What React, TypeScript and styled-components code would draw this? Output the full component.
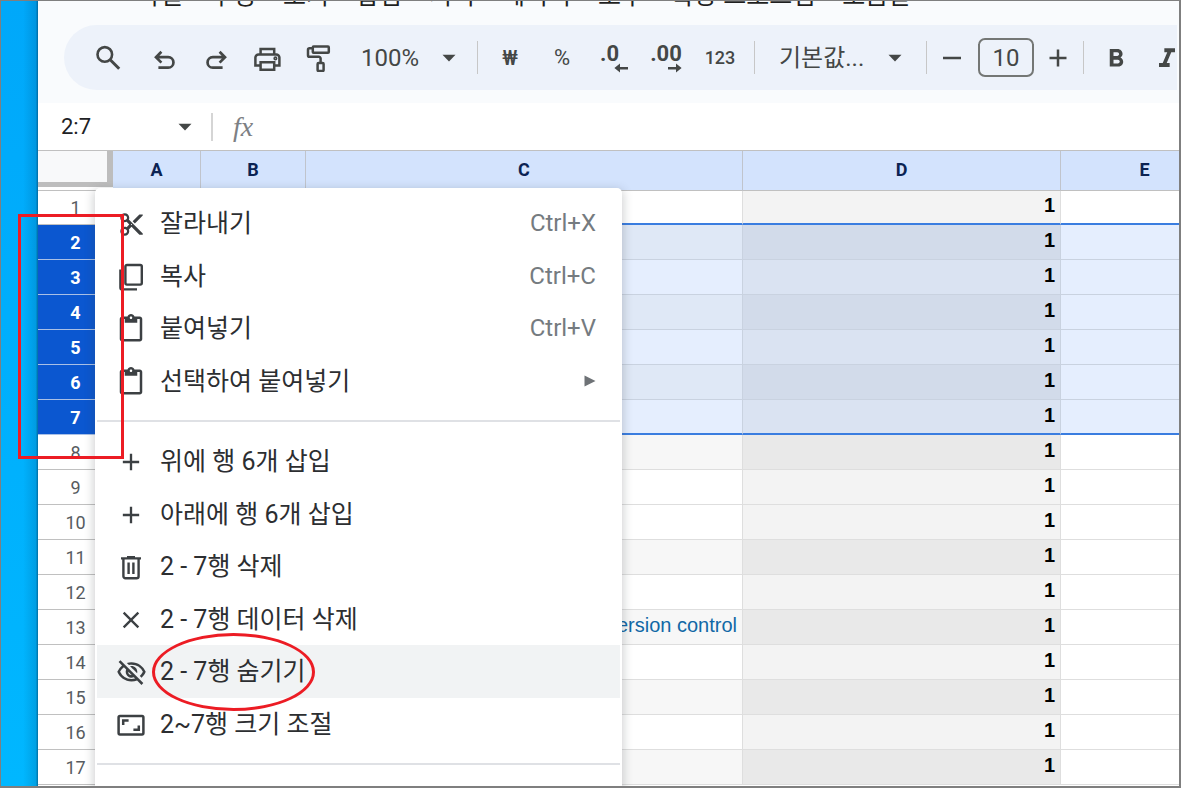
import React from 'react';
import styled, { createGlobalStyle, css } from 'styled-components';
import {
  MdAdd,
  MdClose,
  MdContentCut,
  MdContentPaste,
  MdFormatBold,
  MdFormatItalic,
  MdOutlineVisibilityOff,
} from 'react-icons/md';

const uiFont = `Roboto, "Noto Sans CJK KR", sans-serif`;
const cellFont = `"Liberation Sans", "Noto Sans CJK KR", sans-serif`;

const GlobalStyle = createGlobalStyle`
  *, *::before, *::after { box-sizing: border-box; }
  body { margin: 0; font-family: ${uiFont}; }
  button, input, select { font: inherit; color: inherit; margin: 0; padding: 0; border: 0; background: none; }
`;

const Frame = styled.div`
  position: relative;
  display: flex;
  height: 100vh;
  overflow: hidden;
  border: 1px solid #7f7f7f;
  border-right-width: 2px;
  border-bottom-width: 2px;
  background: #fff;
`;

const Desktop = styled.div`
  flex: 0 0 37px;
  background: linear-gradient(90deg, transparent 60%, rgba(0, 50, 90, 0.16) 94%, rgba(0, 40, 70, 0.5)),
    linear-gradient(#00a8fa, #00b7ff);
`;

const Sheet = styled.main`
  flex: 1;
  min-width: 0;
  overflow: hidden;
`;

const TopBar = styled.header`
  height: 102px;
  overflow: hidden;
  background: #f9fbfd;
`;

const MenuBar = styled.nav`
  display: flex;
  align-items: flex-end;
  gap: 27px;
  height: 24px;
  padding-left: 99px;
`;

const MenuBarButton = styled.button`
  flex: none;
  height: 58px;
  font-size: 25px;
  line-height: 58px;
  color: #1f1f1f;
`;

const Toolbar = styled.div`
  display: flex;
  align-items: center;
  height: 65px;
  margin: 0 2px 0 26px;
  padding-left: 18px;
  overflow: hidden;
  border-radius: 33px 0 0 33px;
  background: #edf2fa;
  color: #444746;
`;

const ToolGroup = styled.div`
  display: flex;
  align-items: center;
  flex: none;
  padding: 0 3px 0 6px;
`;

const ToolButton = styled.button<{ $width?: number; $size?: number; $weight?: number }>`
  display: flex;
  align-items: center;
  justify-content: center;
  flex: none;
  width: ${(p) => p.$width ?? 51}px;
  height: 52px;
  font-size: ${(p) => p.$size ?? 22}px;
  font-weight: ${(p) => p.$weight ?? 400};
`;

const StyleTools = styled.div`
  display: flex;
  flex: none;
  padding-top: 2px;
`;

const Divider = styled.span`
  flex: none;
  width: 1px;
  height: 33px;
  margin: 0 6px;
  background: #c7c7c7;
`;

const Dropdown = styled.label<{ $width: number; $inset: number }>`
  display: flex;
  align-items: center;
  justify-content: space-between;
  flex: none;
  width: ${(p) => p.$width}px;
  padding: 0 ${(p) => p.$inset}px 0 ${(p) => p.$inset}px;
  font-size: 24px;

  select {
    appearance: none;
    outline: none;
    height: 40px;
  }
`;

const SizeInput = styled.input`
  width: 56px;
  height: 39px;
  margin: 0 5px 0 7px;
  border: 2px solid #747775;
  border-radius: 7px;
  font-size: 24px;
  text-align: center;
`;

const Decimals = styled.span`
  display: flex;
  flex-direction: column;
  font-size: 22px;
  font-weight: 700;
  line-height: 19px;
  padding-top: 2px;

  svg {
    align-self: flex-end;
  }
`;

const DecreaseLabel = styled(Decimals)`
  width: 28px;
  text-align: left;
`;

const FormulaBar = styled.div`
  display: flex;
  align-items: center;
  height: 48px;
  border-bottom: 1px solid #c0c0c0;
  background: #fff;
`;

const NameBox = styled.label`
  display: flex;
  align-items: center;
  justify-content: space-between;
  width: 175px;
  padding: 0 19px 0 23px;
  border-right: 2px solid #d5d5d5;
  color: #202124;

  input {
    width: 80px;
    height: 28px;
    font-size: 22px;
  }
`;

const FormulaLabel = styled.label`
  display: flex;
  flex: 1;
  align-items: center;
  padding-left: 20px;
  font: italic 400 28px/28px "Liberation Serif", serif;
  color: #7d8084;

  input {
    flex: 1;
  }
`;

const Grid = styled.table`
  table-layout: fixed;
  width: 1191px;
  min-width: 100%;
  border-collapse: separate;
  border-spacing: 0;
`;

const Col = styled.col<{ $width: number }>`
  width: ${(p) => p.$width}px;
`;

const ColumnHeader = styled.th`
  height: 40px;
  padding: 0 0 2px;
  border-right: 1px solid #c0c4cc;
  border-bottom: 1px solid #c0c0c0;
  background: #d3e3fd;
  font-size: 18px;
  font-weight: 700;
  color: #0b2353;
`;

const CornerHeader = styled.td`
  padding: 0;
  vertical-align: top;
  border-bottom: 1px solid #c0c0c0;
`;

const Corner = styled.div`
  height: 36px;
  border: solid #bdbdbd;
  border-width: 0 6px 5px 0;
  background: #f8f9fa;
`;

const RowHeader = styled.th<{ $selected: boolean }>`
  padding: 0;
  border-bottom: 1px solid #c0c0c0;
  font-size: 18px;
  font-weight: 400;
  color: #575b5f;
  background: #fff;
  ${(p) =>
    p.$selected &&
    css`
      font-weight: 700;
      color: #fff;
      background: #0b57d0;
      border-bottom-color: #a9c0e6;
    `}
`;

type Tone = 'plain' | 'grey';

const fills: Record<Tone, [string, string, string, string]> = {
  // [unselected, unselected band, selected, selected band]
  plain: ['#ffffff', '#f7f7f7', '#e5eefe', '#dfe8f6'],
  grey: ['#f3f3f3', '#e9e9e9', '#dae3f2', '#d2dbea'],
};

const Cell = styled.td<{ $tone: Tone; $band: boolean; $selected: boolean }>`
  padding: 0 5px 4px 0;
  overflow: hidden;
  white-space: nowrap;
  text-align: right;
  border-right: 1px solid ${(p) => (p.$selected ? '#c9d2e0' : '#dedede')};
  border-bottom: 1px solid ${(p) => (p.$selected ? '#c9d2e0' : '#dedede')};
  background: ${(p) => fills[p.$tone][(p.$selected ? 2 : 0) + (p.$band ? 1 : 0)]};
  font: 700 20px/22px ${cellFont};
  color: #000;

  a {
    font-weight: 400;
    color: #1168a6;
    text-decoration: none;
  }
`;

const Row = styled.tr<{ $edge: boolean; $short: boolean }>`
  height: ${(p) => (p.$short ? 34 : 35)}px;

  ${(p) =>
    p.$edge &&
    css`
      ${Cell} {
        border-bottom: 2px solid #3a7de0;
      }
    `}
`;

const ContextMenu = styled.div`
  position: absolute;
  left: 94px;
  top: 187px;
  width: 527px;
  height: 640px;
  padding-top: 9px;
  border-radius: 5px;
  background: #fff;
  box-shadow: 0 3px 10px 2px rgba(60, 64, 67, 0.22);
`;

const MenuGroup = styled.div<{ $height: number }>`
  display: grid;
  grid-auto-rows: 1fr;
  height: ${(p) => p.$height}px;
`;

const MenuRule = styled.hr`
  height: 2px;
  margin: 13px 2px;
  border: 0;
  background: #dfe1e5;
`;

const MenuItem = styled.button<{ $active?: boolean }>`
  display: flex;
  align-items: center;
  margin: 0 2px;
  padding: 0 24px 0 17px;
  text-align: left;
  font-size: 25px;
  color: #2c2e31;
  background: ${(p) => (p.$active ? '#f1f3f4' : 'transparent')};
`;

const IconSlot = styled.span`
  display: flex;
  justify-content: center;
  flex: none;
  width: 34px;
  margin-right: 12px;
  padding-top: 2px;
  color: #3c4043;
`;

const ItemLabel = styled.span`
  flex: 1;
  padding-bottom: 4px;
`;

const Shortcut = styled.kbd`
  font-family: ${uiFont};
  font-size: 24px;
  color: #757b80;
`;

const Mark = styled.div`
  position: absolute;
  border: 3px solid #ec1c24;
  pointer-events: none;
`;

const RowsMark = styled(Mark)`
  left: 17px;
  top: 213px;
  width: 106px;
  height: 245px;
`;

const HideMark = styled(Mark)`
  left: 151px;
  top: 632px;
  width: 163px;
  height: 78px;
  border-radius: 50%;
`;

const Line = ({ children, size = 28, width = 2.5 }: { children: React.ReactNode; size?: number; width?: number }) => (
  <svg width={size} height={size} viewBox="0 0 28 28" fill="none" stroke="currentColor" strokeWidth={width} aria-hidden="true">
    {children}
  </svg>
);

const SearchIcon = () => (
  <Line width={2.6}>
    <circle cx="10.8" cy="10.4" r="7.3" />
    <path d="M16.2 15.8 L25.2 24.8" strokeWidth="3" />
  </Line>
);

const UndoIcon = () => (
  <Line width={2.7}>
    <path d="M10.4 7.8 L5 13.2 L10.4 18.6 M5.2 13.2 H17.2 a5.2 5.2 0 0 1 0 10.5 H7.4" />
  </Line>
);

const RedoIcon = () => (
  <Line width={2.7}>
    <path d="M17.6 7.8 L23 13.2 L17.6 18.6 M22.8 13.2 H10.8 a5.2 5.2 0 0 0 0 10.5 H20.6" />
  </Line>
);

const PrintIcon = () => (
  <Line>
    <path d="M7.6 10.2 V4.9 H21.2 V10.2" />
    <path d="M7 21.4 H2.4 V13.6 a3.2 3.2 0 0 1 3.2 -3.2 H23.2 a3.2 3.2 0 0 1 3.2 3.2 V21.4 H21.8" />
    <path d="M7.6 18.2 H21.2 V25.8 H7.6 Z" />
    <circle cx="22.4" cy="14.4" r="0.8" />
  </Line>
);

const PaintIcon = () => (
  <Line>
    <rect x="8.8" y="2.6" width="16" height="6.2" rx="0.8" />
    <path d="M8.8 4.2 H5.6 a1.6 1.6 0 0 0 -1.6 1.6 V11.2 a1.6 1.6 0 0 0 1.6 1.6 H14.8 a1.8 1.8 0 0 1 1.8 1.8 V19" />
    <rect x="13.6" y="19" width="6" height="8" rx="1" />
  </Line>
);

const Caret = () => (
  <svg width="14" height="8" viewBox="0 0 14 8" aria-hidden="true">
    <path d="M0.5 0.8 H13.5 L7 7.4 Z" fill="#444746" />
  </svg>
);

const Arrow = ({ flip }: { flip?: boolean }) => (
  <svg width="14" height="10" viewBox="0 0 14 10" aria-hidden="true">
    <path
      d={flip ? 'M0 4 H8 V0.4 L13.6 5 L8 9.6 V6.4 H0 Z' : 'M14 4 H6 V0.4 L0.4 5 L6 9.6 V6.4 H14 Z'}
      fill="currentColor"
    />
  </svg>
);

const CopyIcon = () => (
  <Line width={2.4}>
    <rect x="8.4" y="2" width="16.4" height="19.6" rx="1.6" />
    <path d="M3.4 6.4 V24.4 a2 2 0 0 0 2 2 H20" />
  </Line>
);

const TrashIcon = () => (
  <Line width={2.4}>
    <path d="M4 5.4 H24 M10 4.2 H18" />
    <path d="M6.4 5.4 V23.2 a2 2 0 0 0 2 2 H19.6 a2 2 0 0 0 2 -2 V5.4" />
    <path d="M11.6 9.4 V21 M16.4 9.4 V21" />
  </Line>
);

const ResizeIcon = () => (
  <Line width={2.5}>
    <rect x="1.6" y="5" width="24.8" height="18.4" rx="1.4" />
    <path d="M6.2 14 V9.6 H11.6 M21.8 14.4 V18.8 H16.4" />
  </Line>
);

const SubmenuArrow = () => (
  <svg width="12" height="12" viewBox="0 0 12 12" aria-hidden="true">
    <path d="M0.5 0.5 L11.5 6 L0.5 11.5 Z" fill="#6e7276" />
  </svg>
);

type Entry = { icon: React.ReactNode; label: string; keys?: string; submenu?: boolean; active?: boolean };

const editEntries: Entry[] = [
  { icon: <MdContentCut size={27} />, label: '잘라내기', keys: 'Ctrl+X' },
  { icon: <CopyIcon />, label: '복사', keys: 'Ctrl+C' },
  { icon: <MdContentPaste size={30} />, label: '붙여넣기', keys: 'Ctrl+V' },
  { icon: <MdContentPaste size={30} />, label: '선택하여 붙여넣기', submenu: true },
];

const rowEntries: Entry[] = [
  { icon: <MdAdd size={28} />, label: '위에 행 6개 삽입' },
  { icon: <MdAdd size={28} />, label: '아래에 행 6개 삽입' },
  { icon: <TrashIcon />, label: '2 - 7행 삭제' },
  { icon: <MdClose size={28} />, label: '2 - 7행 데이터 삭제' },
  { icon: <MdOutlineVisibilityOff size={31} />, label: '2 - 7행 숨기기', active: true },
  { icon: <ResizeIcon />, label: '2~7행 크기 조절' },
];

const menus = ['파일', '수정', '보기', '삽입', '서식', '데이터', '도구', '확장 프로그램', '도움말'];
const columns = ['A', 'B', 'C', 'D', 'E'];
const columnWidths = [75, 88, 105, 437, 318, 168];
const bandedRows = [2, 4, 6, 8, 11, 13, 15, 17];
const rows = Array.from({ length: 17 }, (_, i) => i + 1);

const Entries = ({ items, height }: { items: Entry[]; height: number }) => (
  <MenuGroup $height={height} role="group">
    {items.map((item) => (
      <MenuItem key={item.label} role="menuitem" $active={item.active}>
        <IconSlot>{item.icon}</IconSlot>
        <ItemLabel>{item.label}</ItemLabel>
        {item.keys && <Shortcut>{item.keys}</Shortcut>}
        {item.submenu && <SubmenuArrow />}
      </MenuItem>
    ))}
  </MenuGroup>
);

export default function App() {
  return (
    <>
      <GlobalStyle />
      <Frame>
        <Desktop />
        <Sheet>
          <TopBar>
            <MenuBar>
              {menus.map((name) => (
                <MenuBarButton key={name}>{name}</MenuBarButton>
              ))}
            </MenuBar>
            <Toolbar role="toolbar">
              <ToolButton aria-label="검색"><SearchIcon /></ToolButton>
              <ToolGroup>
                <ToolButton aria-label="실행취소"><UndoIcon /></ToolButton>
                <ToolButton aria-label="재실행"><RedoIcon /></ToolButton>
                <ToolButton aria-label="인쇄"><PrintIcon /></ToolButton>
                <ToolButton aria-label="서식 복사"><PaintIcon /></ToolButton>
              </ToolGroup>
              <Dropdown $width={125} $inset={15}>
                <select aria-label="확대/축소" defaultValue="100%">
                  <option>100%</option>
                </select>
                <Caret />
              </Dropdown>
              <Divider />
              <ToolButton $width={52} $size={20} $weight={500}>₩</ToolButton>
              <ToolButton $width={52}>%</ToolButton>
              <ToolButton $width={52} aria-label="소수점 이하 자릿수 감소">
                <DecreaseLabel>.0<Arrow /></DecreaseLabel>
              </ToolButton>
              <ToolButton $width={52} aria-label="소수점 이하 자릿수 증가">
                <Decimals>.00<Arrow flip /></Decimals>
              </ToolButton>
              <ToolButton $width={56} $size={18} $weight={500}>123</ToolButton>
              <Divider />
              <Dropdown $width={159} $inset={18}>
                <select aria-label="글꼴" defaultValue="기본값...">
                  <option>기본값...</option>
                </select>
                <Caret />
              </Dropdown>
              <Divider />
              <ToolButton $width={38} aria-label="글꼴 크기 줄이기">
                <Line><path d="M5 14 H23" /></Line>
              </ToolButton>
              <SizeInput aria-label="글꼴 크기" defaultValue="10" />
              <ToolButton $width={38} aria-label="글꼴 크기 늘리기">
                <Line><path d="M5.5 14 H22.5 M14 5.5 V22.5" /></Line>
              </ToolButton>
              <Divider />
              <StyleTools>
                <ToolButton aria-label="굵게"><MdFormatBold size={30} /></ToolButton>
                <ToolButton aria-label="기울임꼴"><MdFormatItalic size={32} /></ToolButton>
              </StyleTools>
            </Toolbar>
          </TopBar>
          <FormulaBar>
            <NameBox>
              <input aria-label="이름 상자" defaultValue="2:7" />
              <Caret />
            </NameBox>
            <FormulaLabel>
              fx
              <input aria-label="수식" />
            </FormulaLabel>
          </FormulaBar>
          <Grid>
            <colgroup>
              {columnWidths.map((width, i) => (
                <Col key={i} $width={width} />
              ))}
            </colgroup>
            <thead>
              <tr>
                <CornerHeader><Corner /></CornerHeader>
                {columns.map((name) => (
                  <ColumnHeader key={name} scope="col">{name}</ColumnHeader>
                ))}
              </tr>
            </thead>
            <tbody>
              {rows.map((n) => {
                const selected = n >= 2 && n <= 7;
                const band = bandedRows.includes(n);
                return (
                  <Row key={n} $edge={n === 1 || n === 7} $short={n === 1}>
                    <RowHeader scope="row" $selected={selected}>{n}</RowHeader>
                    <Cell $tone="plain" $band={band} $selected={selected} />
                    <Cell $tone="plain" $band={band} $selected={selected} />
                    <Cell $tone="plain" $band={band} $selected={selected}>
                      {n === 13 && <a href="#version-control">version control</a>}
                    </Cell>
                    <Cell $tone="grey" $band={band} $selected={selected}>1</Cell>
                    <Cell $tone="plain" $band={false} $selected={selected} />
                  </Row>
                );
              })}
            </tbody>
          </Grid>
        </Sheet>
        <ContextMenu role="menu">
          <Entries items={editEntries} height={210} />
          <MenuRule />
          <Entries items={rowEntries} height={315} />
          <MenuRule />
        </ContextMenu>
        <RowsMark />
        <HideMark />
      </Frame>
    </>
  );
}
